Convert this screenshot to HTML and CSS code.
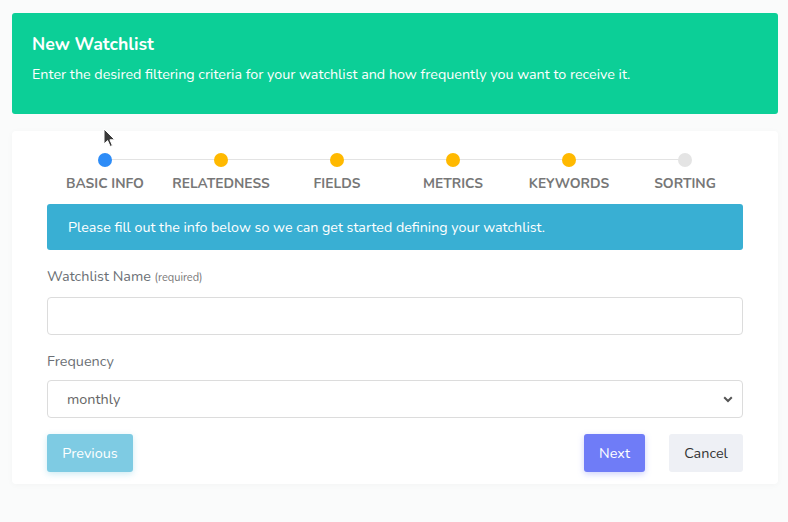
FILE: index.html
```html
<!DOCTYPE html>
<html>
<head>
<meta charset="utf-8">
<link rel="stylesheet" href="styles.css">
</head>
<body>
<div class="page">
  <header class="hero">
    <h1 class="hero-title">New Watchlist</h1>
    <p class="hero-sub">Enter the desired filtering criteria for your watchlist and how frequently you want to receive it.</p>
  </header>
  <section class="card">
    <ol class="steps">
      <li class="step step-active"><span class="dot"></span><span class="step-label">Basic Info</span></li>
      <li class="step step-done"><span class="dot"></span><span class="step-label">Relatedness</span></li>
      <li class="step step-done"><span class="dot"></span><span class="step-label">Fields</span></li>
      <li class="step step-done"><span class="dot"></span><span class="step-label">Metrics</span></li>
      <li class="step step-done"><span class="dot"></span><span class="step-label">Keywords</span></li>
      <li class="step step-todo"><span class="dot"></span><span class="step-label">Sorting</span></li>
    </ol>
    <div class="alert">Please fill out the info below so we can get started defining your watchlist.</div>
    <div class="field">
      <label class="label">Watchlist Name <small class="hint">(required)</small></label>
      <input class="input" type="text">
    </div>
    <div class="field">
      <label class="label">Frequency</label>
      <div class="select">
        <span class="select-value">monthly</span>
        <svg class="chev" width="10" height="7" viewBox="0 0 10 7"><path d="M1.2 1.3 L5 5 L8.8 1.3" fill="none" stroke="#555" stroke-width="2"/></svg>
      </div>
    </div>
    <div class="actions">
      <button class="btn btn-prev">Previous</button>
      <div class="spacer"></div>
      <button class="btn btn-next">Next</button>
      <button class="btn btn-cancel">Cancel</button>
    </div>
    <svg class="cursor" width="13" height="21" viewBox="0 0 13 21"><path d="M1 1 L1 16 L4.6 12.6 L7.2 18.5 L9.4 17.5 L6.9 11.8 L11.8 11.8 Z" fill="#3a3a3a" stroke="#fff" stroke-width="1"/></svg>
  </section>
</div>
</body>
</html>
```
FILE: styles.css
```css
* { box-sizing: border-box; }
html, body { margin: 0; padding: 0; }
body {
  background: #fafbfb;
  font-family: "Nunito", "Lato", "Open Sans", sans-serif;
  width: 788px;
  height: 522px;
  overflow: hidden;
}
.page {
  padding: 13px 10px 0 12px;
  display: flex;
  flex-direction: column;
  gap: 17px;
}
.hero {
  background: #0ccf97;
  border-radius: 3px;
  height: 101px;
  padding: 20px 20px 0 20px;
  color: #fff;
}
.hero-title {
  margin: 0;
  font-size: 17.7px;
  font-weight: 700;
  line-height: 22px;
}
.hero-sub {
  margin: 10px 0 0 0;
  font-size: 14.3px;
  line-height: 20px;
}
.card {
  position: relative;
  background: #fff;
  border-radius: 4px;
  box-shadow: 0 1px 6px rgba(0,0,0,0.03);
  height: 353px;
  padding: 22px 35px 0 35px;
}
.steps {
  list-style: none;
  margin: 0;
  padding: 0;
  display: grid;
  grid-template-columns: repeat(6, 1fr);
  position: relative;
}
.steps::before {
  content: "";
  position: absolute;
  left: 58px;
  right: 58px;
  top: 6px;
  height: 1px;
  background: #e3e3e3;
}
.step {
  display: flex;
  flex-direction: column;
  align-items: center;
  position: relative;
}
.dot {
  width: 14px;
  height: 14px;
  border-radius: 50%;
  background: #ffb900;
}
.step-active .dot { background: #2d8cf7; }
.step-todo .dot { background: #e4e4e4; }
.step-label {
  margin-top: 8px;
  font-size: 13.8px;
  font-weight: 700;
  color: #777;
  text-transform: uppercase;
  line-height: 18px;
  white-space: nowrap;
}
.alert {
  margin-top: 11px;
  background: #39afd3;
  border-radius: 3px;
  height: 46px;
  padding: 0 21px;
  display: flex;
  align-items: center;
  color: #fff;
  font-size: 14.25px;
}
.field { margin-top: 16px; display: flex; flex-direction: column; }
.field + .field { margin-top: 16px; }
.label {
  font-size: 14.4px;
  color: #6b6f75;
  line-height: 20px;
  margin-bottom: 9px;
}
.hint { font-size: 11px; color: #777; }
.input {
  height: 38px;
  border: 1px solid #dcdcdc;
  border-radius: 4px;
  background: #fff;
  font: inherit;
}
.select {
  height: 38px;
  border: 1px solid #dcdcdc;
  border-radius: 4px;
  display: flex;
  align-items: center;
  padding: 0 9px 0 19px;
  font-size: 14.4px;
  color: #666;
}
.select-value { flex: 1; }
.actions {
  margin-top: 16px;
  display: flex;
  gap: 24px;
}
.spacer { flex: 1; }
.btn {
  height: 38px;
  border: none;
  border-radius: 3px;
  font: inherit;
  font-size: 14.4px;
  padding: 0 10px;
}
.btn-prev { background: #7ecbe3; color: #fff; width: 86px; box-shadow: 0 2px 6px rgba(57,175,211,0.25); }
.btn-next { background: #6f7cf7; color: #fff; width: 61px; box-shadow: 0 2px 6px rgba(111,124,247,0.35); }
.btn-cancel { background: #eef0f5; color: #333; width: 74px; }
.cursor { position: absolute; left: 91px; top: -3px; }
```
